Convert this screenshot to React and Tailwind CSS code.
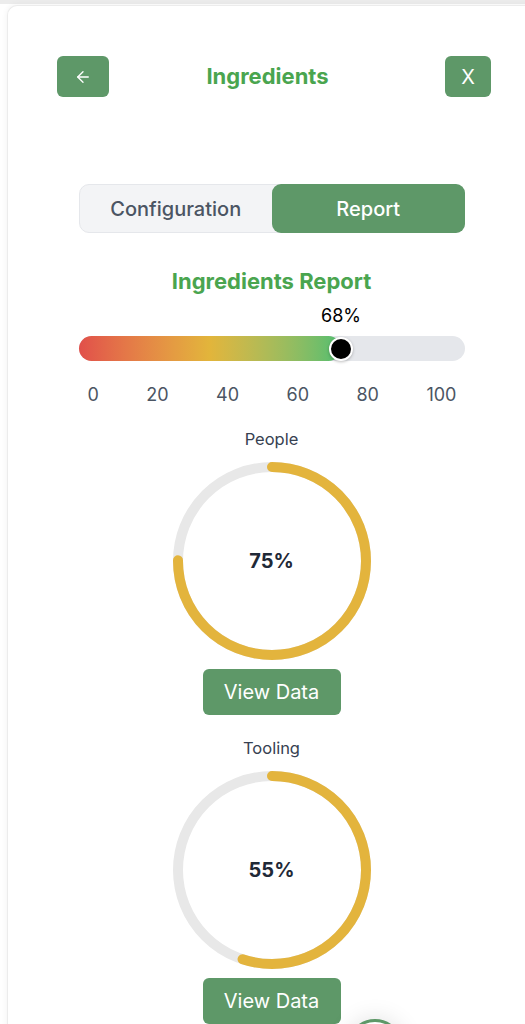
import React from "react";

function Ring({ value }) {
  const r = 94;
  const c = 2 * Math.PI * r;
  return (
    <div className="relative w-[198px] h-[198px]">
      <svg width="198" height="198" viewBox="0 0 198 198" className="-rotate-90">
        <circle cx="99" cy="99" r={r} fill="none" stroke="#e8e8e8" strokeWidth="10" />
        <circle
          cx="99"
          cy="99"
          r={r}
          fill="none"
          stroke="#e3b43d"
          strokeWidth="10"
          strokeLinecap="round"
          strokeDasharray={`${(c * value) / 100} ${c}`}
        />
      </svg>
      <div className="absolute inset-0 flex items-center justify-center text-[20px] font-bold text-[#1f2937]">
        {value}%
      </div>
    </div>
  );
}

function Section({ label, value, first }) {
  return (
    <div className={`flex flex-col items-center ${first ? "mt-[22px]" : "mt-[23px]"}`}>
      <div className="text-[16.5px] leading-[20px] text-[#374151]">{label}</div>
      <div className="mt-[13px]">
        <Ring value={value} />
      </div>
      <button className="mt-[9px] w-[138px] h-[46px] rounded-[6px] bg-[#5e9868] text-white text-[20px]">
        View Data
      </button>
    </div>
  );
}

export default function App() {
  const ticks = ["0", "20", "40", "60", "80", "100"];
  return (
    <div
      className="relative w-[525px] h-[1024px] overflow-hidden bg-white"
      style={{ fontFamily: "Inter, 'Noto Sans', sans-serif" }}
    >
      <div className="h-[4px] bg-[#ececec]" />
      <div className="ml-[7px] mt-[1px] w-[528px] h-[1100px] bg-white rounded-tl-[10px] border-l border-t border-[#ececec] shadow-[0_0_6px_rgba(0,0,0,0.06)]">
        <div className="flex items-center pt-[50px] pl-[49px] pr-[44px]">
          <button className="w-[52px] h-[41px] rounded-[6px] bg-[#5e9868] flex items-center justify-center">
            <svg width="18" height="18" viewBox="0 0 24 24" fill="none" stroke="white" strokeWidth="1.8" strokeLinecap="round" strokeLinejoin="round">
              <path d="M19 12H5" />
              <path d="M12 19l-7-7 7-7" />
            </svg>
          </button>
          <div className="flex-1 text-center pr-[19px] text-[22px] font-bold text-[#4aa54f]">Ingredients</div>
          <button className="w-[46px] h-[41px] rounded-[6px] bg-[#5e9868] text-white text-[20px] flex items-center justify-center">
            X
          </button>
        </div>

        <div className="mt-[87px] mx-auto w-[386px] h-[49px] flex rounded-[10px] border border-[#e5e7eb] bg-[#f3f4f6]">
          <div className="flex-1 flex items-center justify-center text-[20px] font-medium text-[#4b5563]">
            Configuration
          </div>
          <div className="flex-1 -my-px -mr-px flex items-center justify-center rounded-[9px] bg-[#5e9868] text-white text-[20px] font-medium">
            Report
          </div>
        </div>

        <div className="mt-[33px] text-center text-[22px] leading-[30px] font-bold text-[#4aa54f]">
          Ingredients Report
        </div>

        <div className="mx-auto w-[386px]">
          <div className="relative h-[40px]">
            <div className="absolute left-[68%] top-[8px] -translate-x-1/2 text-[18px] leading-[24px] text-black">
              68%
            </div>
          </div>
          <div className="relative h-[25px] rounded-full bg-[#e5e7eb]">
            <div
              className="absolute left-0 top-0 h-full rounded-full bg-gradient-to-r from-[#e14f4a] via-[#e2b53b] to-[#4ebe70]"
              style={{ width: "68%" }}
            />
            <div
              className="absolute top-1/2 -translate-x-1/2 -translate-y-1/2 w-[24px] h-[24px] rounded-full bg-black border-2 border-white shadow-[0_1px_3px_rgba(0,0,0,0.25)]"
              style={{ left: "68%" }}
            />
          </div>
          <div className="mt-[22px] pl-[9px] pr-[8px] flex justify-between text-[18px] leading-[24px] text-[#4b5563]">
            {ticks.map((t) => (
              <span key={t}>{t}</span>
            ))}
          </div>
        </div>

        <Section label="People" value={75} first />
        <Section label="Tooling" value={55} />
      </div>

      <div className="absolute left-[347px] top-[1019px] w-[56px] h-[56px] rounded-full bg-white border-[3px] border-[#5e9868] shadow-[0_0_24px_rgba(0,0,0,0.12)]" />
    </div>
  );
}
